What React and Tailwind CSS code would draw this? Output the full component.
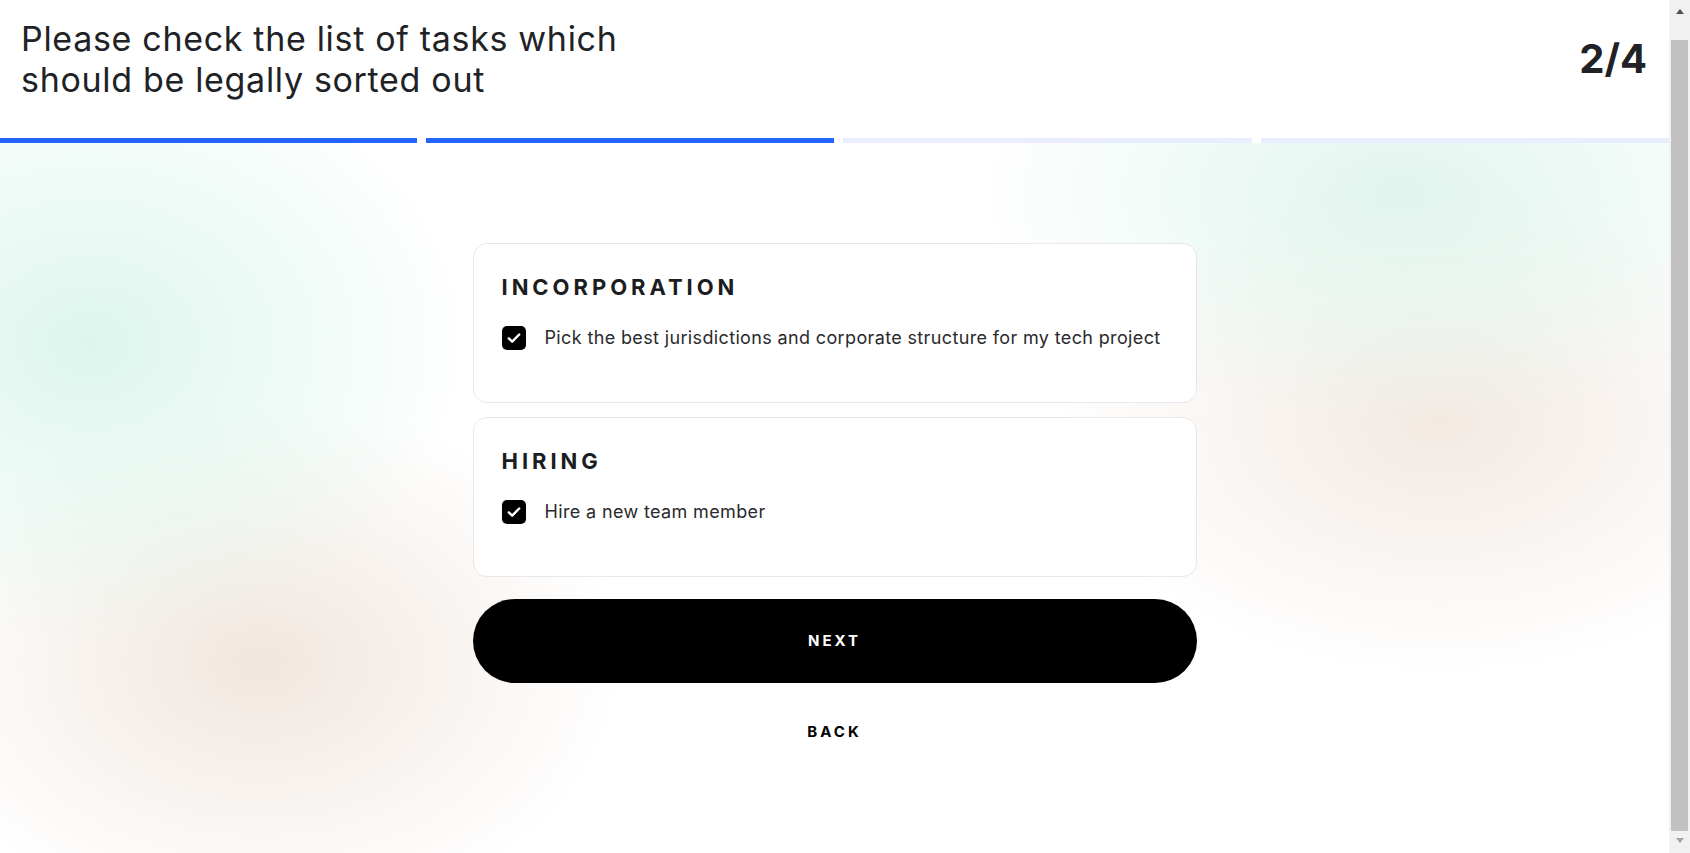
import React from "react";

function Check() {
  return (
    <div className="flex h-[24px] w-[24px] shrink-0 items-center justify-center rounded-[5px] bg-black">
      <svg width="16" height="16" viewBox="0 0 16 16" fill="none">
        <path d="M2.8 8.4l3.4 3.3 7-7.2" stroke="white" strokeWidth="2.4" strokeLinecap="round" strokeLinejoin="round" />
      </svg>
    </div>
  );
}

function Card({ title, item }) {
  return (
    <div className="w-[724px] rounded-[14px] border border-[#e7e7ec] bg-white px-[28px] pt-[30px] pb-[52px]">
      <div className="text-[22px] font-bold leading-[26px] tracking-[0.18em] text-[#1c1d21]">{title}</div>
      <div className="mt-[26px] flex items-center gap-[19px]">
        <Check />
        <span className="text-[18px] leading-[24px] tracking-[0.02em] text-[#2a2a2e]">{item}</span>
      </div>
    </div>
  );
}

export default function App() {
  return (
    <div className="flex h-[853px] w-[1690px] overflow-hidden bg-white font-['Inter',sans-serif]">
      <div className="flex min-w-0 flex-1 flex-col">
        <header className="flex items-center justify-between pt-[18px] pr-[22px] pb-[38px] pl-[21px]">
          <h1 className="max-w-[680px] text-[34px] font-normal leading-[41px] tracking-[0.02em] text-[#202226]">
            Please check the list of tasks which should be legally sorted out
          </h1>
          <div className="text-[40px] font-bold leading-[48px] text-[#202226]">2/4</div>
        </header>
        <div className="flex h-[5px] gap-[9px]">
          <div className="w-[417px] bg-[#2563ff]" />
          <div className="flex-1 bg-[#2563ff]" />
          <div className="flex-1 bg-[#e8eefd]" />
          <div className="flex-1 bg-[#e8eefd]" />
        </div>
        <main className="flex flex-1 flex-col items-center bg-[radial-gradient(ellipse_380px_300px_at_90px_200px,#dcf6ec,#dcf6ec00),radial-gradient(ellipse_360px_260px_at_260px_520px,#f0e6de,#f0e6de00),radial-gradient(ellipse_420px_230px_at_1400px_50px,#e0f5ed,#e0f5ed00),radial-gradient(ellipse_380px_250px_at_1440px_280px,#f2e9e2,#f2e9e200)] pt-[100px]">
          <div className="flex flex-col gap-[14px]">
            <Card title="INCORPORATION" item="Pick the best jurisdictions and corporate structure for my tech project" />
            <Card title="HIRING" item="Hire a new team member" />
          </div>
          <button className="mt-[22px] flex h-[84px] w-[724px] items-center justify-center rounded-full bg-black text-[15px] font-bold leading-[20px] tracking-[0.2em] text-white">
            NEXT
          </button>
          <button className="mt-[39px] text-[15px] font-bold leading-[20px] tracking-[0.2em] text-black">
            BACK
          </button>
        </main>
      </div>
      <div className="flex w-[21px] flex-col items-center bg-[#f1f1f1]">
        <div className="mt-[9px] h-0 w-0 border-x-[4.5px] border-b-[5px] border-x-transparent border-b-[#505050]" />
        <div className="mt-[26px] h-[791px] w-[17px] bg-[#c1c1c1]" />
        <div className="mt-[7px] h-0 w-0 border-x-[4.5px] border-t-[5px] border-x-transparent border-t-[#a3a3a3]" />
      </div>
    </div>
  );
}
